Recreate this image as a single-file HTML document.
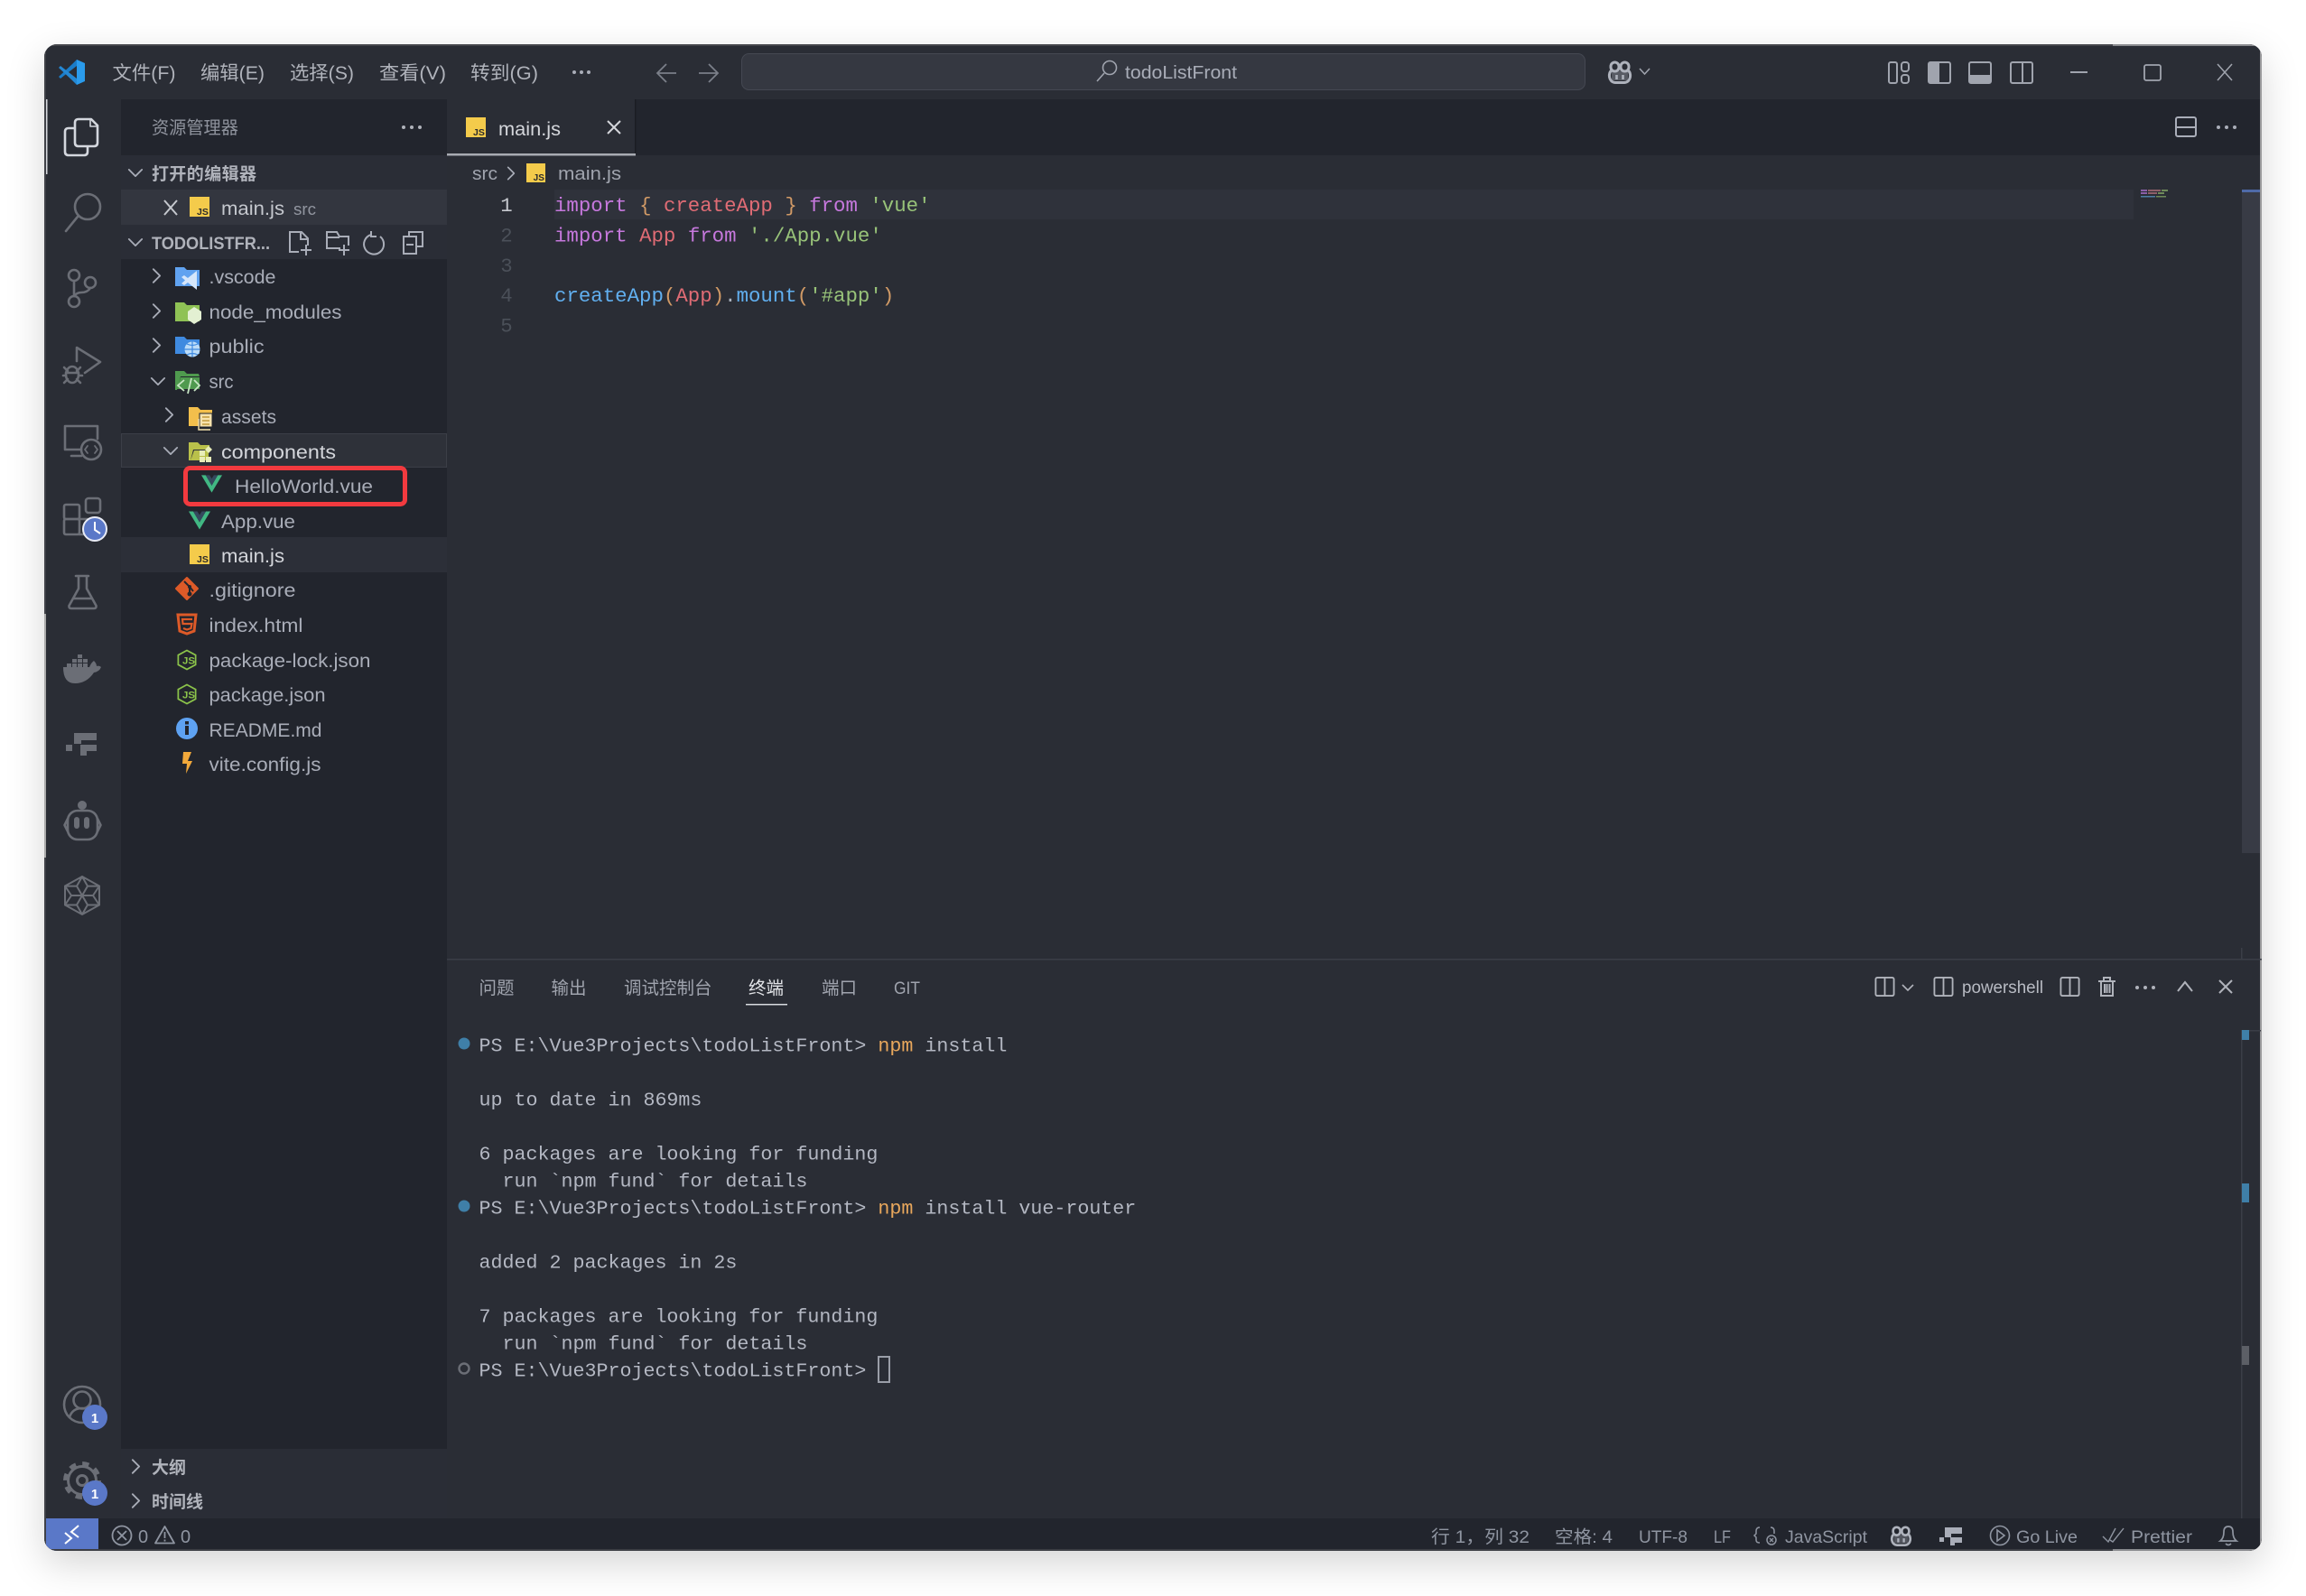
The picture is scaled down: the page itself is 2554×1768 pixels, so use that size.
<!DOCTYPE html>
<html><head><meta charset="utf-8"><title>todoListFront</title>
<style>
html,body{margin:0;padding:0;background:#fff;width:2554px;height:1768px;overflow:hidden}
#sh{position:absolute;left:49px;top:49px;width:2456px;height:1669px;border-radius:14px;box-shadow:0 14px 42px rgba(0,0,0,.17)}
svg{position:absolute;left:0;top:0}
text{font-family:"Liberation Sans","Noto Sans CJK SC",sans-serif;white-space:pre}
.m{font-family:"Liberation Mono","Noto Sans CJK SC",monospace}
.code{font-size:22.4px}
.term{font-size:21.67px;fill:#b4b8c3}
.tree{font-size:21.5px;fill:#a9adb8}
.sec{font-size:19px;font-weight:bold;fill:#b0b3bb}
.ui{font-size:19.5px;fill:#a0a4ae}
.st{font-size:19.5px;fill:#8f95a1}
.menu{font-size:21px;fill:#b0b3bb}
.ic{fill:none;stroke:#6b6e76;stroke-width:2.6;stroke-linecap:round;stroke-linejoin:round}
.k{fill:#c678dd}.r{fill:#e06c75}.g{fill:#98c379}.b{fill:#61afef}.o{fill:#d19a66}.w{fill:#abb2bf}
</style></head><body>
<div id="sh"></div>
<svg width="2554" height="1768" viewBox="0 0 2554 1768" xmlns="http://www.w3.org/2000/svg">
<defs>
<clipPath id="win"><rect x="49" y="49" width="2456" height="1669" rx="14"/></clipPath>
<symbol id="js" viewBox="0 0 22 22" overflow="visible"><rect width="22" height="22" fill="#f4cb4b"/><text x="8" y="20" style="font-size:10.5px;font-weight:bold;fill:#2b2b2b">JS</text></symbol>
<symbol id="vue" viewBox="0 0 24 20"><path d="M0 0H5L12 12 19 0H24L12 20Z" fill="#41b883"/><path d="M5 0H9.5L12 4 14.5 0H19L12 12Z" fill="#35495e"/></symbol>
<symbol id="cr" viewBox="0 0 12 20"><path d="M2 2L10 10 2 18" fill="none" stroke="#a9adb8" stroke-width="2" stroke-linecap="round" stroke-linejoin="round"/></symbol>
<symbol id="cd" viewBox="0 0 20 12"><path d="M2 2L10 10 18 2" fill="none" stroke="#a9adb8" stroke-width="2" stroke-linecap="round" stroke-linejoin="round"/></symbol>
<symbol id="nj" viewBox="0 0 24 26"><path d="M12 1.5L22.5 7.2V18.8L12 24.5 1.5 18.8V7.2Z" fill="none" stroke="#8bc34a" stroke-width="1.9"/><text x="6.5" y="18" style="font-size:12.5px;font-weight:bold;fill:#8bc34a">JS</text></symbol>
<symbol id="split" viewBox="0 0 24 24"><rect x="1" y="1" width="22" height="22" rx="2" fill="none" stroke="#b0b3bb" stroke-width="2"/><path d="M12 1V23" stroke="#b0b3bb" stroke-width="2"/></symbol>
<symbol id="cop" viewBox="0 0 30 26"><g fill="none" stroke="#aeb2bc" stroke-width="3"><rect x="5" y="2" width="9" height="10" rx="4.5"/><rect x="16" y="2" width="9" height="10" rx="4.5"/><path d="M6 11C2 13 2 24 10 24.5H20C28 24 28 13 24 11"/></g><path d="M11.5 16V21M18.5 16V21" stroke="#aeb2bc" stroke-width="2.6"/><path d="M6 11.5H24V22H6Z" fill="#aeb2bc" opacity=".35"/></symbol>
</defs>

<g clip-path="url(#win)">
<rect x="49" y="49" width="2456" height="1669" fill="#2a2d35"/>
<!-- structural bands -->
<rect x="134" y="110" width="361" height="62" fill="#22252d"/>
<rect x="495" y="110" width="2010" height="62" fill="#22252d"/>
<rect x="495" y="110" width="209" height="60" fill="#2a2d35"/>
<rect x="495" y="170" width="209" height="2.5" fill="#a8abb2"/>
<rect x="703" y="110" width="1.5" height="60" fill="#1b1d23"/>
<rect x="134" y="172" width="361" height="38" fill="#2a2d36"/>
<rect x="134" y="210" width="361" height="39" fill="#33363f"/>
<rect x="134" y="249" width="361" height="38" fill="#2a2d36"/>
<rect x="134" y="287" width="361" height="1318" fill="#22252d"/>
<rect x="134" y="1605" width="361" height="77" fill="#2a2d36"/>
<rect x="134.500" y="480.500" width="360" height="37" fill="#2e3139" stroke="#3b3e47"/>
<rect x="134" y="595" width="361" height="39" fill="#2c2f38"/>
<rect x="49" y="1682" width="2456" height="36" fill="#22252d"/>
<rect x="51" y="1682" width="58" height="36" fill="#5a78c8"/>
<!-- edges -->
<rect x="49" y="49" width="2456" height="2" fill="#45464b"/>
<rect x="2340" y="49" width="165" height="2" fill="#8a8b8f"/>
<rect x="49" y="49" width="2" height="1669" fill="#3f4147"/>
<rect x="49" y="680" width="2" height="270" fill="#aaa"/>
<rect x="49" y="1716" width="2456" height="2" fill="#3c3e44"/>
<rect x="2340" y="1716" width="165" height="2" fill="#8a8b8f"/>
<rect x="2503" y="49" width="2" height="1669" fill="#9a9a9c"/>
<rect x="51" y="110" width="1.500" height="83" fill="#d8dae0"/>

<!-- title bar -->
<path d="M85 66L94 70V90L85 94V73Z" fill="#2a9bec"/>
<path d="M85 66V73L72 83 67 87 65 85 80 71Z" fill="#1a7cc8"/>
<path d="M65 75L67 73 85 87V94L80 89Z" fill="#2488d4"/>
<text class="menu" x="124.500" y="88" textLength="70" lengthAdjust="spacingAndGlyphs">文件(F)</text>
<text class="menu" x="222" y="88" textLength="71" lengthAdjust="spacingAndGlyphs">编辑(E)</text>
<text class="menu" x="321" y="88" textLength="71" lengthAdjust="spacingAndGlyphs">选择(S)</text>
<text class="menu" x="420" y="88" textLength="74" lengthAdjust="spacingAndGlyphs">查看(V)</text>
<text class="menu" x="521" y="88" textLength="75" lengthAdjust="spacingAndGlyphs">转到(G)</text>
<g fill="#a9adb8"><circle cx="636" cy="80" r="2"/><circle cx="644" cy="80" r="2"/><circle cx="652" cy="80" r="2"/></g>
<path d="M749 81H729M738 71L728 81 738 91" fill="none" stroke="#7b7f89" stroke-width="1.800"/>
<path d="M774 81H794M785 71L795 81 785 91" fill="none" stroke="#7b7f89" stroke-width="1.800"/>
<rect x="821.500" y="59.500" width="934" height="40" rx="8" fill="#353841" stroke="#454852"/>
<circle cx="1229" cy="75" r="7.500" fill="none" stroke="#a0a4ae" stroke-width="1.600"/><path d="M1223 81L1215 90" stroke="#a0a4ae" stroke-width="1.600"/>
<text x="1246" y="87" style="font-size:20.5px;fill:#a9adb8" textLength="124" lengthAdjust="spacingAndGlyphs">todoListFront</text>
<use href="#cop" x="1779" y="67" width="30" height="26"/>
<path d="M1816 76L1821.500 82 1827 76" fill="none" stroke="#a0a4ae" stroke-width="1.500"/>
<!-- layout icons -->
<g fill="none" stroke="#a0a4ae" stroke-width="2">
<rect x="2092" y="69" width="9" height="23" rx="2"/><rect x="2106" y="69" width="8" height="10" rx="3"/><rect x="2106" y="83" width="8" height="9" rx="3"/>
<rect x="2136" y="69" width="24" height="23" rx="2"/>
<rect x="2181" y="69" width="24" height="23" rx="2"/>
<rect x="2227" y="69" width="24" height="23" rx="2"/><path d="M2240 69V92"/>
</g>
<rect x="2136" y="69" width="12" height="23" fill="#a0a4ae"/>
<rect x="2181" y="83" width="24" height="9" fill="#a0a4ae"/>
<path d="M2293 80H2312" stroke="#a0a4ae" stroke-width="2"/>
<rect x="2375" y="72" width="18" height="17" rx="2" fill="none" stroke="#a0a4ae" stroke-width="1.800"/>
<path d="M2456 71L2472 89M2472 71L2456 89" stroke="#a0a4ae" stroke-width="1.500"/>

<!-- activity bar -->
<g fill="none" stroke="#d4d7de" stroke-width="2.600" stroke-linejoin="round">
<path d="M83 142H76Q72 142 72 146V168Q72 172 76 172H93Q97 172 97 168V162"/>
<path d="M87 132H101L108 139V158Q108 162 104 162H87Q83 162 83 158V136Q83 132 87 132Z"/>
<path d="M100 133V140H107" stroke-width="1.600"/>
</g>
<g class="ic">
<circle cx="97" cy="229" r="14"/><path d="M86 240L73 256"/>
<circle cx="82" cy="305" r="6"/><circle cx="82" cy="334" r="6"/><circle cx="100" cy="313" r="6"/><path d="M82 311V328M100 319Q97 324 90 324Q85 324 82 328"/>
<path d="M85 400V385L111 401 94 413"/><ellipse cx="80" cy="415" rx="7" ry="9"/><path d="M73 413H87M71 407L75 411M89 407L85 411M70 416H73M87 416H91M71 424L75 420M89 424L85 420"/>
<path d="M72 498V472H108V486M72 498H90M79 505H90"/><circle cx="101" cy="498" r="11"/>
<path d="M97 494L94 498 97 502M105 494L108 498 105 502" stroke-width="1.800"/>
<rect x="71" y="559" width="17" height="16" rx="2"/><rect x="71" y="575" width="17" height="17" rx="2"/><path d="M88 575H104V592H88"/><rect x="95" y="552" width="16" height="16" rx="3"/>
<path d="M84 638H98M87 638V652L76.500 671Q76 674 79 674H104Q107 674 106.500 671L96 652V638M81 663H102"/>
<rect x="75" y="898" width="33" height="32" rx="11"/><path d="M75 907L71.500 914 75 921M108 907L111.500 914 108 921"/>
<path d="M91 971L110 981.500V1002.500L91 1013 72 1002.500V981.500ZM91 992H103M91 992L97 1002.400M91 992L85 1002.400M91 992H79M91 992L85 981.600M91 992L97 981.600M103 992L110 981.500M103 992L110 1002.500M97 1002.400L110 1002.500M97 1002.400L91 1013M85 1002.400L91 1013M85 1002.400L72 1002.500M79 992L72 1002.500M79 992L72 981.500M85 981.600L72 981.500M85 981.600L91 971M97 981.600L91 971M97 981.600L110 981.500" stroke-width="2"/>
<circle cx="91" cy="1556" r="20"/><circle cx="91" cy="1551" r="9.500"/><path d="M77 1570Q80 1560 91 1560T105 1570"/>
<circle cx="91" cy="1640" r="15.500" stroke-width="3"/><circle cx="91" cy="1640" r="5.500" stroke-width="3"/>
<circle cx="91" cy="1640" r="18.500" stroke-width="5" stroke-dasharray="7.300 7.240" stroke-linecap="butt"/>
</g>
<g fill="#6b6e76">
<rect x="82" y="905" width="6" height="13" rx="3"/><rect x="93" y="905" width="6" height="13" rx="3"/><circle cx="91" cy="892" r="5"/>
<path d="M70 739H99Q101 734 104 732 107 735 107 738 110 737 112 739 110 744 104 745 96 757 83 757 70 757 70 739Z"/>
<rect x="74" y="735" width="5" height="4"/><rect x="80" y="735" width="5" height="4"/><rect x="86" y="735" width="5" height="4"/><rect x="92" y="735" width="5" height="4"/><rect x="80" y="730" width="5" height="4"/><rect x="86" y="730" width="5" height="4"/><rect x="92" y="730" width="5" height="4"/><rect x="86" y="725" width="5" height="4"/>
<path d="M82 812H107V820H90V824H82ZM89 825H107V832H96V837H89Z"/><rect x="73" y="825" width="7" height="7"/>
</g>
<circle cx="105" cy="586" r="13" fill="#5a78c8" stroke="#e8ebf5" stroke-width="2"/><path d="M105 578V587L111 591" fill="none" stroke="#fff" stroke-width="2"/>
<circle cx="105" cy="1570" r="14" fill="#5a78c8"/><text x="105" y="1576" text-anchor="middle" style="font-size:15px;font-weight:bold;fill:#fff">1</text>
<circle cx="105" cy="1654" r="14" fill="#5a78c8"/><text x="105" y="1660" text-anchor="middle" style="font-size:15px;font-weight:bold;fill:#fff">1</text>

<!-- sidebar -->
<text class="ui" x="168" y="148" style="font-size:19.2px;fill:#8f939d">资源管理器</text>
<g fill="#b0b3bb"><circle cx="447" cy="141" r="2"/><circle cx="456" cy="141" r="2"/><circle cx="465" cy="141" r="2"/></g>
<use href="#cd" x="141" y="186" width="18" height="11"/>
<text class="sec" x="168" y="199" textLength="116">打开的编辑器</text>
<path d="M182 222L196 238M196 222L182 238" stroke="#c5c8ce" stroke-width="2"/>
<use href="#js" x="210" y="218" width="22" height="22"/>
<text class="tree" x="245" y="238" textLength="70" lengthAdjust="spacingAndGlyphs" style="fill:#c5c8ce">main.js</text>
<text x="325" y="238" style="font-size:18px;fill:#9296a0" textLength="25" lengthAdjust="spacingAndGlyphs">src</text>
<use href="#cd" x="141" y="263" width="18" height="11"/>
<text class="sec" x="168" y="276" textLength="131" lengthAdjust="spacingAndGlyphs">TODOLISTFR...</text>
<g fill="none" stroke="#a9adb8" stroke-width="2">
<path d="M331 279H321V257H334L341 264V272M333 257V265H341M339 271V283M333 277H345"/>
<path d="M377 275H362V257H373L376 262H386V272M362 263H376M381 271V283M375 277H387"/>
<path d="M411 260A11 11 0 1 0 421 262M411 256V262H417"/>
<path d="M453 261V257H468V273H462M447 262H461V281H447ZM450 271H458"/>
</g>
<!-- tree -->
<use href="#cr" x="168" y="296" width="11" height="19"/>
<path d="M194 296H204L207 299H221V317H194Z" fill="#60a2f0"/><path d="M218 300L208 308 204 305 201 307 205 310.500 201 314 204 316 208 313 218 321Z" fill="#d5e6fb"/>
<text class="tree" x="231.500" y="314" textLength="74" lengthAdjust="spacingAndGlyphs">.vscode</text>
<use href="#cr" x="168" y="335" width="11" height="19"/>
<path d="M194 335H204L207 338H221V356H194Z" fill="#8fc255"/><path d="M215 340L223 345V354L215 359 208 354V345Z" fill="#e3f0d2"/>
<text class="tree" x="231.500" y="353" textLength="147" lengthAdjust="spacingAndGlyphs">node_modules</text>
<use href="#cr" x="168" y="373" width="11" height="19"/>
<path d="M194 373H204L207 376H221V392H194Z" fill="#3f8ae0"/><circle cx="213" cy="387" r="8.500" fill="#bcdcf8"/><path d="M204.500 387H221.500M213 378.500V395.500M207 381Q213 384 219 381M207 393Q213 390 219 393" stroke="#3f8ae0" stroke-width="1.200" fill="none"/>
<text class="tree" x="231.500" y="391" textLength="61" lengthAdjust="spacingAndGlyphs">public</text>
<use href="#cd" x="166" y="417" width="18" height="11"/>
<path d="M194 411H204L207 414H220L221 417H200L196 432H194Z M196 431L200 418H221V431Z" fill="#4f9a4e"/>
<path d="M204 421L197 427 204 433M215 421L221 427 215 433M212 419L208 436" fill="none" stroke="#c7e6c3" stroke-width="1.800"/>
<text class="tree" x="231.500" y="430" textLength="27" lengthAdjust="spacingAndGlyphs">src</text>
<use href="#cr" x="182" y="450" width="11" height="19"/>
<path d="M209 451H219L222 454H235V472H209Z" fill="#f3bf4c"/><path d="M221 458H235V473H221Z" fill="#f8e3ad" stroke="#22252d"/><path d="M224 462H232M224 466H232M224 470H232" stroke="#c39a3d" stroke-width="1.400"/><path d="M220 464V476H233" fill="none" stroke="#f8e3ad" stroke-width="1.400"/>
<text class="tree" x="245" y="469" textLength="61" lengthAdjust="spacingAndGlyphs">assets</text>
<use href="#cd" x="180" y="494" width="18" height="11"/>
<path d="M209 490H219L222 493H232V498H214L211 510H209Z M211 510L215 499H231V510Z" fill="#b9c04a"/>
<path d="M221 499H227V505H221ZM221 506H227V512H221ZM228 506H234V512H228ZM231 494L235 498 231 502 227 498Z" fill="#e8edb9"/>
<text class="tree" x="245" y="508" textLength="127" lengthAdjust="spacingAndGlyphs" style="fill:#d4d6db">components</text>
<use href="#vue" x="223" y="526" width="23" height="20"/>
<text class="tree" x="260" y="546" textLength="153" lengthAdjust="spacingAndGlyphs">HelloWorld.vue</text>
<use href="#vue" x="209" y="566" width="24" height="21"/>
<text class="tree" x="245" y="585" textLength="82" lengthAdjust="spacingAndGlyphs">App.vue</text>
<use href="#js" x="210" y="603" width="22" height="22"/>
<text class="tree" x="245" y="623" textLength="70" lengthAdjust="spacingAndGlyphs" style="fill:#d4d6db">main.js</text>
<rect x="205.500" y="518.500" width="243" height="40" rx="5" fill="none" stroke="#f23a3f" stroke-width="5"/>
<path d="M207 640L219 652 207 664 195 652Z" fill="#dd5a28" stroke="#dd5a28" stroke-width="2" stroke-linejoin="round"/><path d="M204 644L210 650V658M210 650L214 655" stroke="#22252d" stroke-width="2" fill="none"/><circle cx="210" cy="658" r="2.500" fill="#22252d"/><circle cx="210" cy="650" r="2" fill="#22252d"/>
<text class="tree" x="231.500" y="661" textLength="96" lengthAdjust="spacingAndGlyphs">.gitignore</text>
<path d="M197 681H217L215 699 207 702 199 699Z" fill="none" stroke="#dd5a28" stroke-width="3"/><path d="M213 686H202L202.500 691H212.500L211.500 696 207 697.500 203 696" fill="none" stroke="#dd5a28" stroke-width="2.200"/>
<text class="tree" x="231.500" y="700" textLength="104" lengthAdjust="spacingAndGlyphs">index.html</text>
<use href="#nj" x="196" y="719" width="22" height="24"/>
<text class="tree" x="231.500" y="739" textLength="179" lengthAdjust="spacingAndGlyphs">package-lock.json</text>
<use href="#nj" x="196" y="757" width="22" height="24"/>
<text class="tree" x="231.500" y="777" textLength="129" lengthAdjust="spacingAndGlyphs">package.json</text>
<circle cx="207" cy="807" r="12" fill="#5ea2f2"/><rect x="205" y="804" width="4" height="10" fill="#22252d"/><rect x="205" y="799" width="4" height="3.500" fill="#22252d"/>
<text class="tree" x="231.500" y="816" textLength="125" lengthAdjust="spacingAndGlyphs">README.md</text>
<path d="M203 833H212L208 843H213L206 857 207 846H202Z" fill="#f2a93b"/>
<text class="tree" x="231.500" y="854" textLength="124" lengthAdjust="spacingAndGlyphs">vite.config.js</text>
<use href="#cr" x="145" y="1615" width="11" height="19"/>
<text class="sec" x="168" y="1632">大纲</text>
<use href="#cr" x="145" y="1653" width="11" height="19"/>
<text class="sec" x="168" y="1670">时间线</text>

<!-- tab & breadcrumb -->
<use href="#js" x="516" y="130" width="22" height="22"/>
<text x="552" y="150" style="font-size:21.5px;fill:#d4d6db" textLength="69" lengthAdjust="spacingAndGlyphs">main.js</text>
<path d="M673 134L687 148M687 134L673 148" stroke="#d4d6db" stroke-width="2"/>
<rect x="2410" y="130" width="22" height="21" rx="2" fill="none" stroke="#a9adb8" stroke-width="2"/><path d="M2410 141H2432" stroke="#a9adb8" stroke-width="2"/>
<g fill="#a9adb8"><circle cx="2457" cy="141" r="2"/><circle cx="2466" cy="141" r="2"/><circle cx="2475" cy="141" r="2"/></g>
<text x="523" y="199" style="font-size:20.5px;fill:#a0a4ae" textLength="28" lengthAdjust="spacingAndGlyphs">src</text>
<use href="#cr" x="561" y="183" width="10" height="18"/>
<use href="#js" x="583" y="181" width="21" height="21"/>
<text x="618" y="199" style="font-size:20.5px;fill:#a0a4ae" textLength="70" lengthAdjust="spacingAndGlyphs">main.js</text>

<!-- editor -->
<rect x="614" y="210" width="1749" height="33" fill="#2f323b"/>
<rect x="2483" y="210" width="20" height="735" fill="#383b45"/>
<rect x="2483" y="210" width="20" height="3" fill="#4f6aa8"/>
<rect x="2371" y="210" width="7" height="2" fill="#8a5fa8"/><rect x="2379" y="210" width="14" height="2" fill="#8f5f6a"/><rect x="2394" y="210" width="7" height="2" fill="#6f8a5a"/>
<rect x="2371" y="213" width="7" height="2" fill="#8a5fa8"/><rect x="2379" y="213" width="10" height="2" fill="#8f5f6a"/><rect x="2390" y="213" width="7" height="2" fill="#6f8a5a"/>
<rect x="2371" y="217" width="16" height="1.500" fill="#4f7fa6"/><rect x="2388" y="217" width="11" height="1.500" fill="#6f8a5a"/>
<text class="m" x="561" y="234" text-anchor="middle" style="font-size:22.4px;fill:#c5c8ce">1</text>
<text class="m" x="561" y="267.500" text-anchor="middle" style="font-size:22.4px;fill:#4b5059">2</text>
<text class="m" x="561" y="301" text-anchor="middle" style="font-size:22.4px;fill:#4b5059">3</text>
<text class="m" x="561" y="334" text-anchor="middle" style="font-size:22.4px;fill:#4b5059">4</text>
<text class="m" x="561" y="367.500" text-anchor="middle" style="font-size:22.4px;fill:#4b5059">5</text>
<text class="m code" x="614" y="234"><tspan class="k">import</tspan><tspan class="w"> </tspan><tspan class="o">{</tspan><tspan class="w"> </tspan><tspan class="r">createApp</tspan><tspan class="w"> </tspan><tspan class="o">}</tspan><tspan class="w"> </tspan><tspan class="k">from</tspan><tspan class="w"> </tspan><tspan class="g">'vue'</tspan></text>
<text class="m code" x="614" y="267.500"><tspan class="k">import</tspan><tspan class="w"> </tspan><tspan class="r">App</tspan><tspan class="w"> </tspan><tspan class="k">from</tspan><tspan class="w"> </tspan><tspan class="g">'./App.vue'</tspan></text>
<text class="m code" x="614" y="334"><tspan class="b">createApp</tspan><tspan class="o">(</tspan><tspan class="r">App</tspan><tspan class="o">)</tspan><tspan class="w">.</tspan><tspan class="b">mount</tspan><tspan class="o">(</tspan><tspan class="g">'#app'</tspan><tspan class="o">)</tspan></text>

<!-- panel -->
<rect x="495" y="1062" width="2010" height="1.500" fill="#3b3e47"/>
<rect x="2482" y="1050" width="1.500" height="12" fill="#3b3e47"/>
<text class="ui" x="530.500" y="1101">问题</text>
<text class="ui" x="610.500" y="1101">输出</text>
<text class="ui" x="691" y="1101">调试控制台</text>
<text class="ui" x="829" y="1101" style="fill:#e2e4e8">终端</text>
<text class="ui" x="910" y="1101">端口</text>
<text class="ui" x="990" y="1101" textLength="29" lengthAdjust="spacingAndGlyphs">GIT</text>
<rect x="826" y="1112" width="46" height="1.500" fill="#d8dae0"/>
<use href="#split" x="2076" y="1082" width="23" height="22"/>
<path d="M2107 1091L2113 1097 2119 1091" fill="none" stroke="#b0b3bb" stroke-width="1.600"/>
<use href="#split" x="2141" y="1082" width="23" height="22"/>
<text x="2173" y="1100" style="font-size:19.5px;fill:#b8bbc3" textLength="90" lengthAdjust="spacingAndGlyphs">powershell</text>
<use href="#split" x="2281" y="1082" width="23" height="22"/>
<g fill="none" stroke="#b0b3bb" stroke-width="2"><path d="M2324 1087H2343M2330 1087V1083H2337V1087M2327 1087V1103H2340V1087M2331 1090V1100M2333.500 1090V1100M2336.500 1090V1100"/></g>
<g fill="#b0b3bb"><circle cx="2367" cy="1094" r="2"/><circle cx="2376" cy="1094" r="2"/><circle cx="2385" cy="1094" r="2"/></g>
<path d="M2412 1098L2420 1088 2428 1098" fill="none" stroke="#b0b3bb" stroke-width="2"/>
<path d="M2458 1086L2472 1100M2472 1086L2458 1100" stroke="#b0b3bb" stroke-width="2"/>
<rect x="2482" y="1141" width="1.500" height="541" fill="#3b3e47"/>
<rect x="2482" y="1141" width="22" height="1.500" fill="#3b3e47"/>
<rect x="2483" y="1141" width="8" height="11" fill="#3f7fa8"/>
<rect x="2483" y="1311" width="8" height="21" fill="#3f7fa8"/>
<rect x="2483" y="1491" width="8" height="21" fill="#5c5f66"/>
<circle cx="514" cy="1156" r="6.500" fill="#3f7fa8"/>
<circle cx="514" cy="1336" r="6.500" fill="#3f7fa8"/>
<circle cx="514" cy="1516" r="5.500" fill="none" stroke="#6b6e76" stroke-width="2.400"/>
<text class="m term" x="530.500" y="1164.500">PS E:\Vue3Projects\todoListFront&gt; <tspan fill="#e8a75c">npm</tspan> install</text>
<text class="m term" x="530.500" y="1224.500">up to date in 869ms</text>
<text class="m term" x="530.500" y="1284.500">6 packages are looking for funding</text>
<text class="m term" x="530.500" y="1314.500">  run `npm fund` for details</text>
<text class="m term" x="530.500" y="1344.500">PS E:\Vue3Projects\todoListFront&gt; <tspan fill="#e8a75c">npm</tspan> install vue-router</text>
<text class="m term" x="530.500" y="1404.500">added 2 packages in 2s</text>
<text class="m term" x="530.500" y="1464.500">7 packages are looking for funding</text>
<text class="m term" x="530.500" y="1494.500">  run `npm fund` for details</text>
<text class="m term" x="530.500" y="1524.500">PS E:\Vue3Projects\todoListFront&gt;</text>
<rect x="973" y="1503" width="12" height="28" fill="none" stroke="#9a9ea8" stroke-width="2"/>

<!-- status bar -->
<path d="M72 1698L79 1704 72 1710M87 1690L79 1697 87 1703" fill="none" stroke="#fff" stroke-width="2"/>
<circle cx="135" cy="1701" r="10.500" fill="none" stroke="#8f95a1" stroke-width="1.800"/><path d="M130 1696L140 1706M140 1696L130 1706" stroke="#8f95a1" stroke-width="1.800"/>
<text class="st" x="153" y="1709" style="font-size:20px">0</text>
<path d="M182.500 1691L193 1709.500H172Z" fill="none" stroke="#8f95a1" stroke-width="1.800" stroke-linejoin="round"/><path d="M182.500 1697V1704M182.500 1705.500V1707.500" stroke="#8f95a1" stroke-width="1.800"/>
<text class="st" x="200" y="1709" style="font-size:20px">0</text>
<text class="st" x="1585" y="1709" textLength="109" lengthAdjust="spacingAndGlyphs">行 1，列 32</text>
<text class="st" x="1722" y="1709" textLength="64" lengthAdjust="spacingAndGlyphs">空格: 4</text>
<text class="st" x="1815" y="1709" textLength="54" lengthAdjust="spacingAndGlyphs">UTF-8</text>
<text class="st" x="1898" y="1709" textLength="19" lengthAdjust="spacingAndGlyphs">LF</text>
<path d="M1949 1692Q1945 1692 1945 1696V1699L1943 1701 1945 1703V1706Q1945 1709 1949 1709M1961 1692Q1965 1692 1965 1696V1699" fill="none" stroke="#8f95a1" stroke-width="1.500"/><circle cx="1962" cy="1706" r="5" fill="none" stroke="#8f95a1" stroke-width="1.500"/><path d="M1960 1704L1964 1708M1964 1704L1960 1708" stroke="#8f95a1" stroke-width="1.300"/>
<text class="st" x="1977" y="1709" textLength="91" lengthAdjust="spacingAndGlyphs">JavaScript</text>
<use href="#cop" x="2092" y="1690" width="27" height="23"/>
<g fill="#a9adb8"><path d="M2154 1692H2173V1699H2161V1703H2154ZM2160 1703H2173V1709H2165V1712H2160Z"/><rect x="2148" y="1703" width="5" height="5"/></g>
<circle cx="2215" cy="1701" r="10.500" fill="none" stroke="#8f95a1" stroke-width="1.600"/><path d="M2212 1695L2220 1701 2212 1707Z" fill="none" stroke="#8f95a1" stroke-width="1.600"/>
<text class="st" x="2233" y="1709" textLength="68" lengthAdjust="spacingAndGlyphs">Go Live</text>
<path d="M2329 1702L2335 1708 2343 1693M2337 1706L2340 1708 2352 1693" fill="none" stroke="#8f95a1" stroke-width="1.400"/>
<text class="st" x="2360" y="1709" textLength="68" lengthAdjust="spacingAndGlyphs">Prettier</text>
<path d="M2459 1707Q2463 1704 2463 1697 2463 1691 2468 1691 2473 1691 2473 1697 2473 1704 2477 1707ZM2465 1710Q2468 1713 2471 1710" fill="none" stroke="#8f95a1" stroke-width="1.700"/>
</g>
</svg>
</body></html>
